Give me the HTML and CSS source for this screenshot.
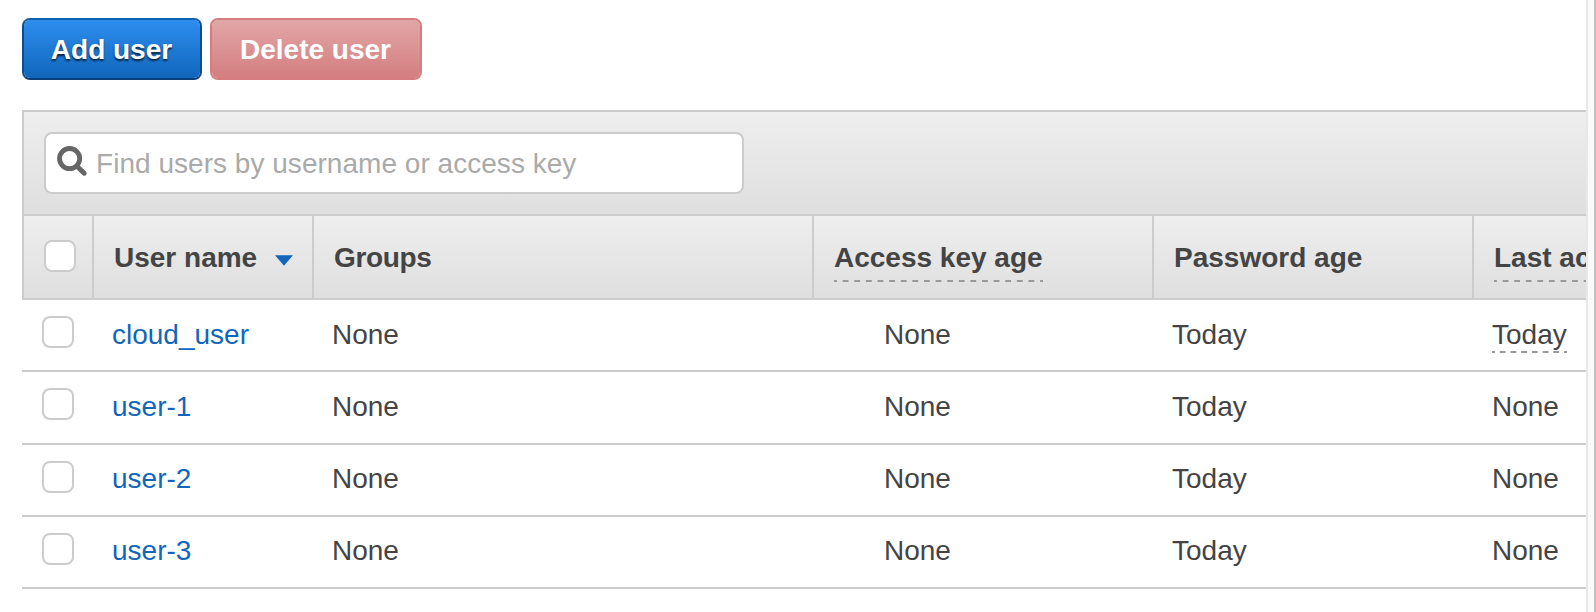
FILE: index.html
```html
<!DOCTYPE html>
<html lang="en">
<head>
<meta charset="utf-8">
<title>Users</title>
<link rel="stylesheet" href="styles.css">
</head>
<body>
<div class="page">
  <main class="content">
    <div class="actions">
      <button class="btn btn-primary">Add user</button>
      <button class="btn btn-danger">Delete user</button>
    </div>
    <section class="panel">
      <div class="toolbar">
        <label class="search">
          <svg class="search-icon" width="32" height="32" viewBox="0 0 32 32"><circle cx="13.6" cy="12.6" r="10.1" fill="none" stroke="#666" stroke-width="4.8"/><path d="M21 20.2 28.2 27.2" stroke="#666" stroke-width="5" stroke-linecap="round"/></svg>
          <span class="placeholder">Find users by username or access key</span>
        </label>
      </div>
      <div class="row head">
        <div class="cell"><span class="check"></span></div>
        <div class="cell">User name<svg class="sort" width="18" height="11" viewBox="0 0 18 11"><path d="M0 .3H18L9 10.7Z" fill="#1166bb"/></svg></div>
        <div class="cell groups">Groups</div>
        <div class="cell"><span class="hint">Access key age</span></div>
        <div class="cell">Password age</div>
        <div class="cell"><span class="hint">Last activity</span></div>
      </div>
    </section>
    <div class="row item">
      <div class="cell"><span class="check"></span></div>
      <div class="cell"><a class="link">cloud_user</a></div>
      <div class="cell">None</div>
      <div class="cell key-age">None</div>
      <div class="cell">Today</div>
      <div class="cell"><span class="hint">Today</span></div>
    </div>
    <div class="row item tall">
      <div class="cell"><span class="check"></span></div>
      <div class="cell"><a class="link">user-1</a></div>
      <div class="cell">None</div>
      <div class="cell key-age">None</div>
      <div class="cell">Today</div>
      <div class="cell">None</div>
    </div>
    <div class="row item snug">
      <div class="cell"><span class="check"></span></div>
      <div class="cell"><a class="link">user-2</a></div>
      <div class="cell">None</div>
      <div class="cell key-age">None</div>
      <div class="cell">Today</div>
      <div class="cell">None</div>
    </div>
    <div class="row item snug">
      <div class="cell"><span class="check"></span></div>
      <div class="cell"><a class="link">user-3</a></div>
      <div class="cell">None</div>
      <div class="cell key-age">None</div>
      <div class="cell">Today</div>
      <div class="cell">None</div>
    </div>
  </main>
  <div class="edge"></div>
</div>
</body>
</html>
```

FILE: styles.css
```css
* { box-sizing: border-box; }

body {
  margin: 0;
  background: #fff;
  color: #444;
  font: 28px/32px "Liberation Sans", Arial, sans-serif;
}

.page {
  display: flex;
  height: 612px;
  overflow: hidden;
}

.content {
  flex: 1;
  min-width: 0;
  padding: 18px 0 0 22px;
  overflow: hidden;
}

.edge {
  flex: none;
  width: 10px;
  background: #fafafa;
  border-left: 2px solid #e8e8e8;
  border-right: 2px solid #c0c0c0;
}

.actions {
  display: flex;
  gap: 8px;
  margin-bottom: 30px;
}

.btn {
  height: 62px;
  padding: 1px 1px 0 0;
  border: 2px solid;
  border-radius: 8px;
  color: #fff;
  font: bold 28px/32px "Liberation Sans", Arial, sans-serif;
  white-space: nowrap;
}

.btn-primary {
  width: 180px;
  border-color: #1160b0 #0d4d8f #0a3f78;
  background: linear-gradient(#2e8eef, #1166bb) padding-box;
  text-shadow: 0 2px 2px rgba(0, 0, 0, .7);
}

.btn-danger {
  width: 212px;
  border-color: #d47c7e;
  background: linear-gradient(#e2a6a6, #d47e80) padding-box;
}

.panel {
  border: 2px solid #ccc;
  border-right: 0;
}

.toolbar {
  height: 104px;
  padding: 20px;
  border-bottom: 2px solid #ccc;
  background: linear-gradient(#eee, #dfdfdf);
}

.search {
  display: flex;
  width: 700px;
  height: 62px;
  padding: 12px 10px;
  border: 2px solid #ccc;
  border-radius: 8px;
  background: #fff;
}

.search-icon { margin-right: 8px; }

.placeholder {
  padding-top: 2px;
  color: #aaa;
  letter-spacing: .03px;
  white-space: nowrap;
}

.row {
  display: grid;
  grid-template-columns: 72px 220px 500px 340px 320px 320px;
}

.head {
  grid-template-columns: 70px 220px 500px 340px 320px 320px;
  height: 82px;
  background: linear-gradient(#eee, #dfdfdf);
  font-weight: bold;
}

.head .cell {
  padding: 26px 0 0 20px;
  border-right: 2px solid #ccc;
  white-space: nowrap;
}

.head .cell:first-child { padding-top: 24px; }
.head .groups { letter-spacing: -.35px; }

.sort {
  margin-left: 18px;
  vertical-align: 1px;
}

/* Dashes stretch to fit the label, with a half dash at either end */
.hint {
  display: inline-block;
  height: 34px;
  background: linear-gradient(90deg, #999 3px, transparent 3px calc(100% - 3px), #999 calc(100% - 3px)) left bottom / 11.4px 2px;
  background-repeat: round no-repeat;
}

.head .hint { height: 40px; }

.item {
  height: 72px;
  border-bottom: 2px solid #ccc;
}

.item .cell { padding: 19px 0 0 18px; }
.item.snug .cell { padding-top: 18px; }
.item .cell:first-child,
.item.snug .cell:first-child { padding: 16px 0 0 20px; }
.item .cell.key-age { padding-left: 70px; }

.tall { height: 73px; }

.check {
  display: block;
  width: 32px;
  height: 32px;
  border: 2px solid #ccc;
  border-radius: 8px;
  background: #fff;
}

.link { color: #1166bb; }
```
